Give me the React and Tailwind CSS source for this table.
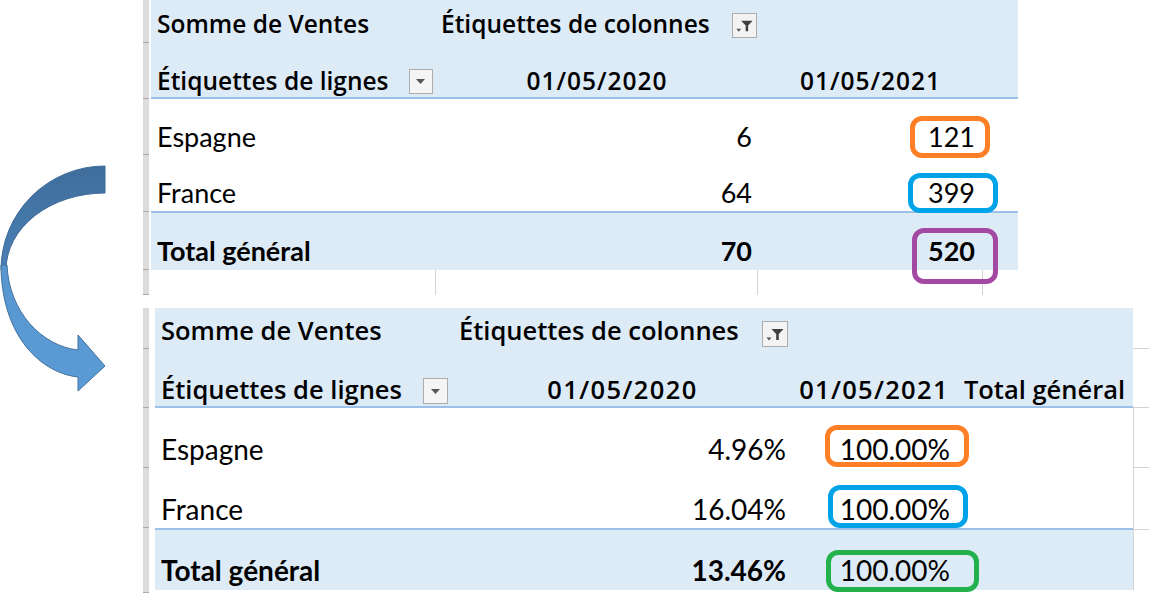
import React from "react";

const headFont = "font-['Open_Sans',sans-serif] font-semibold";
const cellFont = "font-['Lato',sans-serif]";

function CurvedArrow() {
  return (
    <svg width="143" height="593" viewBox="0 0 143 593" className="block">
      <defs>
        <linearGradient id="arrowTop" x1="0" y1="0" x2="0" y2="1">
          <stop offset="0" stopColor="#3f6e9c" />
          <stop offset="1" stopColor="#4a7fb5" />
        </linearGradient>
        <linearGradient id="arrowLow" x1="0" y1="0" x2="0" y2="1">
          <stop offset="0" stopColor="#5896d0" />
          <stop offset="1" stopColor="#5b9bd5" />
        </linearGradient>
      </defs>
      <path
        d="M105,166 A104,104 0 0 0 1,270 L6,270 A99,77 0 0 1 105,193 Z"
        fill="url(#arrowTop)"
        stroke="#3c6a96"
        strokeWidth="1"
      />
      <path
        d="M1,265 C1,330 36,372 78,377 L78,391 L105,366 L78,335 L78,350 C42,346 9,312 7,265 Z"
        fill="url(#arrowLow)"
        stroke="#41719c"
        strokeWidth="1"
      />
    </svg>
  );
}

function RowStrip({ segs, className = "" }) {
  return (
    <div className={`flex flex-col w-[6px] shrink-0 bg-[#dcdcdc] ${className}`}>
      {segs.map((s, i) => (
        <div key={i} className={`${s} border-b border-[#a9a9a9]`} />
      ))}
    </div>
  );
}

function DropButton({ className = "" }) {
  return (
    <span className={`inline-flex items-center justify-center shrink-0 border border-[#adadad] bg-[#f5f5f5] ${className}`}>
      <svg width="9" height="5" viewBox="0 0 9 5">
        <path d="M0 0H9L4.5 5Z" fill="#555" />
      </svg>
    </span>
  );
}

function FilterButton({ className = "" }) {
  return (
    <span className={`inline-flex shrink-0 border border-[#adadad] bg-[#f3f3f3] ${className}`}>
      <svg width="100%" height="100%" viewBox="0 0 24 24">
        <path d="M3.5 15.5H8.5L6 18.5Z" fill="#555" />
        <path d="M8.5 7H20.5L15.8 12V18H13.2V12Z" fill="#404040" />
      </svg>
    </span>
  );
}

function Mark({ className }) {
  return <span className={`absolute z-10 rounded-[12px] border-[5px] ${className}`} />;
}

function TopPivot() {
  const cols = "grid grid-cols-[285px_322px_225px_35px]";
  return (
    <div className="flex h-[295px] shrink-0">
      <RowStrip segs={["h-[43px]", "h-[56px]", "h-[56px]", "h-[57px]", "h-[58px]", "flex-1"]} />
      <div className="ml-[2px] flex flex-col w-[867px]">
        {/* header */}
        <div className={`${cols} h-[43px] bg-[#ddebf7] ${headFont} text-[24.5px] leading-[28px]`}>
          <div className="flex items-end pl-[6px] pb-[5px] whitespace-nowrap">Somme de Ventes</div>
          <div className="flex items-end pl-[5px] pb-[5px] whitespace-nowrap">
            Étiquettes de colonnes
            <FilterButton className="ml-[22px] w-[25px] h-[25px]" />
          </div>
          <div />
          <div />
        </div>
        <div className={`${cols} h-[56px] bg-[#ddebf7] border-b-2 border-[#9bc2e6] ${headFont} text-[24.5px] leading-[28px]`}>
          <div className="flex items-end pl-[6px] pb-[2px] whitespace-nowrap">
            Étiquettes de lignes
            <DropButton className="ml-[20px] w-[24px] h-[25px] mb-[1px]" />
          </div>
          <div className="flex items-end justify-center pb-[2px] tracking-[1px]">01/05/2020</div>
          <div className="flex items-end justify-center pb-[2px] tracking-[1px]">01/05/2021</div>
          <div />
        </div>
        {/* rows */}
        <div className={`${cols} h-[56px] ${cellFont} text-[27px] leading-[30px]`}>
          <div className="flex items-end pl-[6px] pb-[3px]">Espagne</div>
          <div className="flex items-end justify-end pr-[6px] pb-[3px]">6</div>
          <div className="relative flex items-end justify-end pr-[8px] pb-[3px]">
            121
            <Mark className="left-[152px] top-[17px] w-[80px] h-[42px] border-[#ff7f27]" />
          </div>
          <div />
        </div>
        <div className={`${cols} h-[58px] border-b-2 border-[#9bc2e6] ${cellFont} text-[27px] leading-[30px]`}>
          <div className="flex items-end pl-[6px] pb-[3px]">France</div>
          <div className="flex items-end justify-end pr-[6px] pb-[3px]">64</div>
          <div className="relative flex items-end justify-end pr-[8px] pb-[3px]">
            399
            <Mark className="left-[150px] top-[18px] w-[90px] h-[40px] border-[#00a2e8]" />
          </div>
          <div />
        </div>
        <div className={`${cols} h-[57px] bg-[#ddebf7] ${cellFont} font-bold text-[27px] leading-[30px]`}>
          <div className="flex items-end pl-[6px] pb-[4px] whitespace-nowrap">Total général</div>
          <div className="flex items-end justify-end pr-[6px] pb-[4px]">70</div>
          <div className="relative flex items-end justify-end pr-[8px] pb-[4px]">
            520
            <Mark className="left-[154px] top-[15px] w-[86px] h-[56px] border-[#a349a4]" />
          </div>
          <div />
        </div>
        <div className={`${cols} flex-1`}>
          <div className="border-r border-[#d4d4d4]" />
          <div className="border-r border-[#d4d4d4]" />
          <div className="border-r border-[#d4d4d4]" />
          <div />
        </div>
      </div>
    </div>
  );
}

function BottomPivot() {
  const cols = "grid grid-cols-[298px_339px_164px_177px_16px]";
  const blue = "bg-[#ddebf7]";
  return (
    <div className="flex flex-1">
      <RowStrip segs={["h-[41px]", "h-[59px]", "h-[60px]", "h-[60px]", "flex-1"]} />
      <div className="ml-[6px] flex flex-col w-[994px]">
        <div className={`${cols} h-[41px] ${headFont} text-[25.5px] leading-[30px]`}>
          <div className={`${blue} flex items-end pl-[6px] pb-[4px] whitespace-nowrap`}>Somme de Ventes</div>
          <div className={`${blue} flex items-end pl-[6px] pb-[4px] whitespace-nowrap`}>
            Étiquettes de colonnes
            <FilterButton className="ml-[23px] w-[26px] h-[26px] mb-[-2px]" />
          </div>
          <div className={blue} />
          <div className={blue} />
          <div className="border-b border-[#d4d4d4]" />
        </div>
        <div className={`${cols} h-[59px] ${headFont} text-[25.5px] leading-[30px]`}>
          <div className={`${blue} border-b-2 border-[#9bc2e6] flex items-end pl-[6px] pb-[2px] whitespace-nowrap`}>
            Étiquettes de lignes
            <DropButton className="ml-[21px] w-[25px] h-[26px]" />
          </div>
          <div className={`${blue} border-b-2 border-[#9bc2e6] flex items-end justify-center pb-[2px] tracking-[1.4px]`}>01/05/2020</div>
          <div className={`${blue} border-b-2 border-[#9bc2e6] flex items-end justify-center pb-[2px] tracking-[1.3px]`}>01/05/2021</div>
          <div className={`${blue} border-b-2 border-[#9bc2e6] flex items-end justify-center pb-[2px] whitespace-nowrap`}>Total général</div>
          <div className="border-b border-[#d4d4d4]" />
        </div>
        <div className={`${cols} h-[60px] ${cellFont} text-[28px] leading-[30px]`}>
          <div className="flex items-end pl-[6px] pb-[4px]">Espagne</div>
          <div className="flex items-end justify-end pr-[6px] pb-[4px]">4.96%</div>
          <div className="relative flex items-end justify-end pr-[6px] pb-[4px]">
            100.00%
            <Mark className="left-[33px] top-[17px] w-[144px] h-[42px] border-[#ff7f27]" />
          </div>
          <div />
          <div className="border-l border-b border-[#d4d4d4]" />
        </div>
        <div className={`${cols} h-[62px] ${cellFont} text-[28px] leading-[30px]`}>
          <div className="border-b-2 border-[#9bc2e6] flex items-end pl-[6px] pb-[4px]">France</div>
          <div className="border-b-2 border-[#9bc2e6] flex items-end justify-end pr-[6px] pb-[4px]">16.04%</div>
          <div className="relative border-b-2 border-[#9bc2e6] flex items-end justify-end pr-[6px] pb-[4px]">
            100.00%
            <Mark className="left-[36px] top-[17px] w-[140px] h-[43px] border-[#00a2e8]" />
          </div>
          <div className="border-b-2 border-[#9bc2e6]" />
          <div className="border-l border-b border-[#d4d4d4]" />
        </div>
        <div className={`${cols} h-[60px] ${cellFont} font-bold text-[28px] leading-[30px]`}>
          <div className={`${blue} flex items-end pl-[6px] pb-[5px] whitespace-nowrap`}>Total général</div>
          <div className={`${blue} flex items-end justify-end pr-[6px] pb-[5px]`}>13.46%</div>
          <div className={`${blue} relative flex items-end justify-end pr-[6px] pb-[5px] font-normal`}>
            100.00%
            <Mark className="left-[34px] top-[20px] w-[153px] h-[42px] border-[#22b14c]" />
          </div>
          <div className={blue} />
          <div className="border-l border-[#d4d4d4]" />
        </div>
      </div>
    </div>
  );
}

export default function App() {
  return (
    <div className="flex w-[1149px] h-[593px] overflow-hidden bg-white text-black">
      <div className="w-[143px] shrink-0">
        <CurvedArrow />
      </div>
      <div className="flex flex-col gap-[13px] w-[1006px]">
        <TopPivot />
        <BottomPivot />
      </div>
    </div>
  );
}
